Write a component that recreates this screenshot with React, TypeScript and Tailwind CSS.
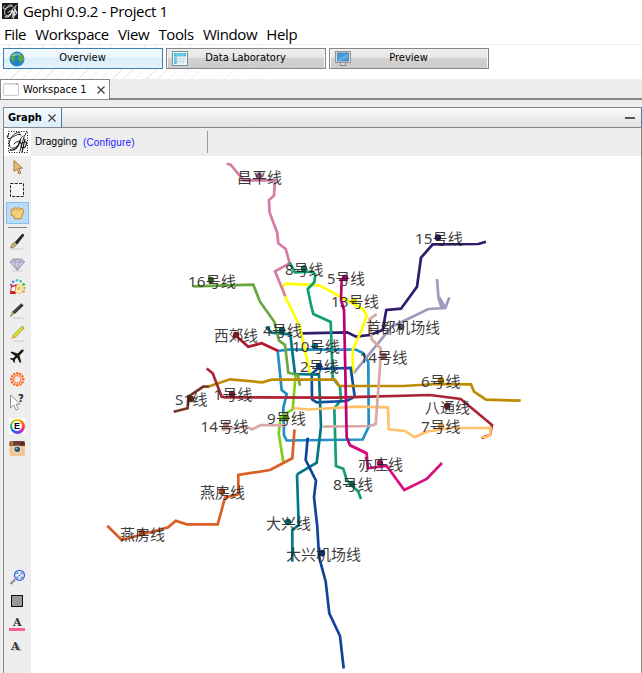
import React from "react";

type Line = { color: string; points: string; closed?: boolean };
type Label = { text: string; x: number; y: number; w: number; dot: [number, number]; color: string };

const UI = "font-['DejaVu_Sans_Condensed','DejaVu_Sans',sans-serif] text-black whitespace-nowrap";

const lines: Line[] = [
  { color: "#1f8fc6", closed: true, points: "277.7,351 288.3,349.7 355.7,349.5 363,353 368.3,362 368.7,426.7 362.7,439.5 286.7,440.5 284,435 283.3,408 286.7,394 281.7,390" },
  { color: "#a09bbd", points: "437,279 438.5,298 441,306 445.3,308 449.3,297.5 445.3,308 428.3,309 410,318 391.7,326.7 353.5,373.3" },
  { color: "#a09bbd", points: "439,297 445.3,308" },
  { color: "#31196b", points: "486,241.7 478.3,244 432.7,244.3 421,257.7 417,286.7 401,308.7 386.3,310 382.7,330 370,335 356,336.7 347.3,332.3 302.3,333.3" },
  { color: "#ffff00", points: "353,373 352.7,350 362,329 366.7,316 363.3,309.3 345,299.3 319.3,285.3 285.3,283.7 282,287.3 286.7,300 299.3,325 310,373.3" },
  { color: "#d47ba8", points: "226.7,163.7 230.7,164.7 243.5,180.3 275,180.3 274,195.7 269,200 269.5,212.3 277.3,233 278.3,243.3 285.7,249 289.7,263.3 275,271.3 285.3,296.3" },
  { color: "#119d78", points: "289.7,262.5 295,272.3 312.7,271.7 315.3,275 314.3,282.3 307.7,289 311,305 313.3,314 330.7,322 332.7,378.3 340,387 341,400 334.3,408.3 336,466 343.3,468.7 346.7,480 358.3,491.7 361,499" },
  { color: "#0e4fa0", closed: true, points: "311.7,374 317.3,369 350.7,368 354.7,396.7 346.7,401 316.7,402.3 312,399.3" },
  { color: "#037a82", points: "297,474.3 298.7,525 292.3,530 292.3,561.7" },
  { color: "#077484", points: "266,326.7 271.7,332.7 290.3,334.3 295,374 319,374.7 321,426.7 316.7,462.7 297,474.3" },
  { color: "#84ce18", points: "295.7,374 292.7,409.3 280.7,416.7 278.7,433.3 283.3,461.7" },
  { color: "#6aa642", points: "193.3,286.3 253.3,284.7 260,301.7 274.3,321.7 279,340.7 285,345 288.3,372.7 297.7,375 300,385.7" },
  { color: "#bd8c00", points: "208,386.7 230,379.3 262.3,382.3 271.7,379.7 335,379.7 339.3,386 403.3,386 436.7,384 471,384.3 474,391.7 486,399.7 520.7,400.7" },
  { color: "#ab2435", points: "206.7,368.5 212.7,373.3 221.7,396.7 225,397.3 335,397.7 370,396.7 430,395 460.7,399 492,425 490,435 481.5,438" },
  { color: "#ffc16b", points: "293.3,408 308.3,409.5 356.7,406.7 388,407.3 388.7,429.3 405,431 414.7,437.3 426.7,431.7 450,428 490.7,428 490,435 486.7,437 481.3,437" },
  { color: "#d8a8a4", points: "376.7,314 369.5,319.3 371.7,339.3 380.7,348.3 380,366.7 375.7,424 370,426 323.3,426.7" },
  { color: "#d8a8a4", points: "221.7,430 228,429 245,426.7 252.3,429.3 260.7,425 285.7,425.3" },
  { color: "#763424", points: "173.7,411.7 187.7,408.3 188.3,396.7 203.3,386.7 209,386.5" },
  { color: "#b5172e", points: "235,335 248.3,346.7 261.7,343.3 278.3,351" },
  { color: "#d85f25", points: "294.5,429.3 292.3,458.3 270,470 238.3,475 238.3,494.3 225,497.7 217.7,524.3 186.7,524.3 175.7,520.7 168.3,527.3 121.7,540 107.3,525.7" },
  { color: "#bd0074", points: "341.7,278.3 341,300 344,310 346.7,437.3 350,445.3 366.7,453.3" },
  { color: "#d8107d", points: "350,445.3 366.7,453.3 367.7,468.3 386.7,466 404.3,490 426.7,479 442,463" },
  { color: "#10449b", points: "307.7,437.7 305.7,460 316,480.7 314,497.3 317.3,526.7 319,556.7 325.7,581.7 329.3,613.3 340,636 343.7,668.5" },
];

const labels: Label[] = [
  { text: "昌平线", x: 237, y: 183, w: 45, dot: [259, 176], color: "#8f4f73" },
  { text: "15号线", x: 415, y: 244, w: 48, dot: [438, 237.5], color: "#251650" },
  { text: "8号线", x: 285, y: 275, w: 38.5, dot: [304, 268.5], color: "#0b6e58" },
  { text: "16号线", x: 188, y: 287, w: 48, dot: [211, 280], color: "#36651d" },
  { text: "5号线", x: 327, y: 284, w: 38, dot: [345, 278], color: "#a00062" },
  { text: "13号线", x: 331, y: 307, w: 48, dot: [354, 301], color: "#d3d300" },
  { text: "首都机场线", x: 366, y: 333, w: 74, dot: [401, 327], color: "#57516d" },
  { text: "西郊线", x: 214, y: 341, w: 44, dot: [236, 335], color: "#a01328" },
  { text: "4号线", x: 263, y: 336, w: 39, dot: [282, 330], color: "#06566b" },
  { text: "10号线", x: 292, y: 352, w: 48, dot: [315, 346], color: "#14658e" },
  { text: "14号线", x: 359.5, y: 363, w: 48, dot: [384, 356], color: "#94635e" },
  { text: "2号线", x: 300, y: 372, w: 39, dot: [319, 366], color: "#0b397a" },
  { text: "6号线", x: 421, y: 387, w: 39.5, dot: [441, 380.5], color: "#9d7200" },
  { text: "1号线", x: 213.5, y: 400, w: 39, dot: [232, 394], color: "#74202b" },
  { text: "S1线", x: 175, y: 405, w: 32.5, dot: [191, 399], color: "#562619" },
  { text: "八通线", x: 425, y: 412.5, w: 45, dot: [447, 406], color: "#791924" },
  { text: "9号线", x: 267, y: 424, w: 39, dot: [286, 418], color: "#4d7b10" },
  { text: "14号线", x: 200.5, y: 431.5, w: 48, dot: [226, 425], color: "#bd8580" },
  { text: "7号线", x: 421, y: 432, w: 39.5, dot: [441, 426], color: "#d59a4d" },
  { text: "亦庄线", x: 358, y: 469.5, w: 45, dot: [380, 463], color: "#a10b60" },
  { text: "8号线", x: 333, y: 490, w: 40, dot: [352, 484], color: "#0b694d" },
  { text: "燕房线", x: 200, y: 498, w: 45, dot: [222, 491.5], color: "#ae4417" },
  { text: "大兴线", x: 266, y: 529, w: 45, dot: [288, 522], color: "#035e62" },
  { text: "燕房线", x: 120, y: 539.5, w: 45, dot: [142, 533], color: "#ae4417" },
  { text: "大兴机场线", x: 286, y: 560, w: 75, dot: [322, 553], color: "#0b306f" },
];

function Graph() {
  return (
    <svg className="block h-[517px] w-[610px]" viewBox="31 156 610 517">
      {lines.map((l, i) =>
        l.closed ? (
          <polygon key={i} points={l.points} fill="none" stroke={l.color} strokeWidth="2.7" />
        ) : (
          <polyline key={i} points={l.points} fill="none" stroke={l.color} strokeWidth="2.7" />
        )
      )}
      {labels.map((l, i) => (
        <circle key={i} cx={l.dot[0]} cy={l.dot[1]} r="3.2" fill={l.color} />
      ))}
      {labels.map((l, i) => (
        <text
          key={i}
          x={l.x}
          y={l.y}
          textLength={l.w}
          lengthAdjust="spacingAndGlyphs"
          className="font-['Noto_Sans','Noto_Sans_CJK_SC',sans-serif] text-[15px]"
          fill="#222"
          fillOpacity="0.88"
        >
          {l.text}
        </text>
      ))}
    </svg>
  );
}

function Script({ color, width }: { color: string; width: number }) {
  return (
    <g fill="none" stroke={color} strokeLinecap="round">
      <path strokeWidth={width} d="M14 3C11 1 6 5 4 10S4 19 8 18S15 11 14 11S9 12 8 14M3 4C0 6 1 10 5 8S12 3 15 5" />
      <path strokeWidth={width * 1.4} d="M14 11C12 17 10 21 4 20" />
      <path strokeWidth={width} d="M20 3C17 7 16 15 14 21M17 6C14 8 13 12 15 14" />
      <path strokeWidth={width * 1.2} d="M18 12C15 12 14 18 17 18S22 11 19 12M19 9L16 22" />
    </g>
  );
}

function ToolIcon({ children, h = 23 }: { children?: React.ReactNode; h?: number }) {
  return (
    <svg className="block w-[23px] shrink-0" height={h} viewBox="0 0 23 23">
      {children}
    </svg>
  );
}

const petals = [0, 30, 60, 90, 120, 150, 180, 210, 240, 270, 300, 330];

function Sidebar() {
  return (
    <div className="flex h-[517px] w-[27px] shrink-0 flex-col bg-[#eee] pl-0.5">
      <ToolIcon>
        <path d="M8 4.5V15.5L10.7 13L13 18L15 17L12.8 12.3H16.5Z" fill="#e8bd72" stroke="#8b6532" strokeWidth=".8" />
      </ToolIcon>
      <ToolIcon>
        <rect x="4.5" y="4.5" width="13" height="13" fill="#f5f5f5" stroke="#222" strokeDasharray="3 1.3" />
      </ToolIcon>
      <div className="box-border h-[22px] w-[23px] border border-[#86c1ed] bg-[#bbdcf4]">
        <svg width="21" height="20" viewBox="0 0 21 20">
          <path d="M4.5 9C3.2 6.4 5.3 5.2 6.8 6.3C7 4.4 9.2 4.4 10 5.7C11 4 12.8 4.3 13.2 6C15 4.8 17.2 6.2 16.6 8.4L15.2 12.5L14.2 15.8H7.5L7 13.2L4.2 12.4L3.9 10.4Z" fill="#f4cf77" stroke="#a97527" strokeWidth=".8" />
          <path d="M7 6.3V8M10 5.9V7.8M13.1 6.2V8" stroke="#be8a36" strokeWidth=".6" />
        </svg>
      </div>
      <div className="ml-0.5 mt-[3px] h-px w-[19px] bg-[#808080]" />
      <div className="h-[2px]" />
      <ToolIcon>
        <path d="M5 19H17" stroke="#ccc" />
        <path d="M4.5 18C5.5 14 7 12.5 9.5 12L11 14C9 17 7 18 4.5 18Z" fill="#c5ae70" stroke="#776738" strokeWidth=".6" />
        <path d="M9.5 12L16.5 4L18 5L11.2 14Z" fill="#292929" stroke="#111" strokeWidth=".8" />
      </ToolIcon>
      <ToolIcon>
        <path d="M4 9L7 6H15.5L18.5 9L11.3 17.5Z" fill="#cecade" stroke="#8481a5" strokeWidth=".8" />
        <path d="M4 9H18.5M7 6L8.5 9L11.3 17L14 9L15.5 6M11 6L8.5 9M11 6L14 9" fill="none" stroke="#8e89b5" strokeWidth=".6" />
        <path d="M6 18H17" stroke="#ccc" />
      </ToolIcon>
      <ToolIcon>
        <circle cx="5.2" cy="9" r="1.2" fill="#a13fc8" />
        <circle cx="7.2" cy="5.8" r="1.2" fill="#5077ec" />
        <circle cx="11" cy="4.3" r="1.2" fill="#27c5c5" />
        <circle cx="14.7" cy="5.2" r="1.2" fill="#31be5e" />
        <circle cx="17.7" cy="8.2" r="1.3" fill="#36b431" />
        <circle cx="18.5" cy="12" r="1.2" fill="#9bc52c" />
        <circle cx="17.7" cy="15.5" r="1.2" fill="#ec9e24" />
        <path d="M4 17.5L5 10L11.5 8V13L9.5 18H4Z" fill="#ca2423" />
        <path d="M5.7 11.5L9.6 10L9 15H5.2Z" fill="#fff" />
        <path d="M11 8.5L16.5 9.5L15 17.5L9 16Z" fill="#fff6cb" stroke="#e0ad4d" strokeWidth=".7" />
        <path d="M12.2 10.3L14.8 11L13.2 14.8L10.8 14Z" fill="#f2bc37" />
      </ToolIcon>
      <ToolIcon>
        <path d="M7 19H18" stroke="#ccc" />
        <path d="M5 15.2L6.5 12.5L15.3 4.2L17.6 6.4L9 14.8Z" fill="#303030" />
        <path d="M6.3 12.7L8.8 15L4.3 17.4Z" fill="#c4a47b" />
        <path d="M4 17.8L5.8 16.8L5 15.9Z" fill="#111" />
        <path d="M8 12.8L15.3 5.7" stroke="#777" strokeWidth=".7" />
      </ToolIcon>
      <ToolIcon>
        <path d="M7 19H18" stroke="#ccc" />
        <path d="M6.5 14L16.2 4.2L18.2 6L8.5 16Z" fill="#ece421" stroke="#8b8720" strokeWidth=".8" />
        <path d="M6.5 14L8.3 15.8L4.5 18Z" fill="#eeb461" />
      </ToolIcon>
      <ToolIcon>
        <path d="M17.5 5C16.8 4 15.3 4.8 13.5 6.7L11.7 8.5L5.5 6.5L4.5 7.5L9.4 10.9L7.2 13.3L5 13L4 14L6.8 15.2L8 18L9 17L8.8 14.8L11.1 12.6L14 18L15.2 17L13.5 10.5L15.4 8.4C17.3 6.5 18.3 5.7 17.5 5Z" fill="#17170d" />
      </ToolIcon>
      <ToolIcon>
        {petals.map((a) => (
          <g key={a} transform={`rotate(${a} 11.3 11.3)`}>
            <path d="M11.3 9V5" stroke="#ff762d" strokeWidth=".7" />
            <circle cx="11.3" cy="5.3" r="1.25" fill="#ff6721" />
          </g>
        ))}
        <circle cx="11.3" cy="11.3" r="3.5" fill="#eee" stroke="#ff7328" strokeWidth="1.2" strokeDasharray="1.6 .5" />
      </ToolIcon>
      <ToolIcon>
        <path d="M4.5 4V17L7.7 14L10.1 19L12.3 18L10 13.2H14Z" fill="#fff" stroke="#777" strokeWidth=".8" />
        <text x="12" y="11" className="font-['DejaVu_Sans',sans-serif] text-[10px] font-bold" fill="#222">?</text>
      </ToolIcon>
      <div className="flex h-[23px] shrink-0 items-center pl-[3px] pt-px">
        <div className="flex size-4 items-center justify-center bg-white">
          <div className="flex size-[15px] items-center justify-center rounded-full bg-[conic-gradient(#ffd000,#ff7900,#f43,#d41dc7,#6246ef,#176bff,#00bc88,#7dce00,#ffd000)]">
            <div className="flex size-[10px] items-center justify-center rounded-full bg-white font-['Liberation_Sans',sans-serif] text-[9px] font-bold leading-none text-black">E</div>
          </div>
        </div>
      </div>
      <ToolIcon>
        <rect x="3.5" y="4" width="15.5" height="15" rx="2" fill="#efc795" />
        <path d="M3.5 9V6Q3.5 4 5.5 4H17Q19 4 19 6V9Z" fill="#6f3930" />
        <path d="M5 4V9" stroke="#d94835" />
        <path d="M6 4V9" stroke="#e2ba36" />
        <path d="M7 4V9" stroke="#43a151" />
        <circle cx="11.3" cy="12.2" r="3.8" fill="#f2e2ce" />
        <circle cx="11.3" cy="12.2" r="2.8" fill="#30546a" />
        <circle cx="10.6" cy="11.4" r="1" fill="#91bad0" />
        <circle cx="16.5" cy="6.3" r="1.2" fill="#382526" />
      </ToolIcon>
      <div className="grow" />
      <ToolIcon>
        <path d="M4.5 18L9 13.5" stroke="#8f8f8f" strokeWidth="2.3" />
        <circle cx="13.5" cy="9.3" r="5" fill="#e8efff" stroke="#3b66ce" strokeWidth="1.3" />
        <path d="M11 8V7H12.5M14.5 7H16V8.5M16 10.5V12H14.5M12.5 12H11V10.5" fill="none" stroke="#3158bd" />
        <rect x="12.8" y="8.8" width="1.5" height="1.5" fill="#3158bd" />
      </ToolIcon>
      <ToolIcon>
        <rect x="5.5" y="6.5" width="11" height="11" fill="#999" stroke="#111" />
      </ToolIcon>
      <ToolIcon>
        <text x="7" y="14" className="font-['DejaVu_Serif',serif] text-[11px] font-bold" fill="#333">A</text>
        <rect x="3" y="16" width="16" height="3" fill="#ff608c" />
      </ToolIcon>
      <div className="flex h-[23px] shrink-0 items-center pl-[5px] font-['DejaVu_Serif',serif] text-[11px] font-bold leading-none text-[#333] [text-shadow:2px_1px_0_#c3c3c3]">A</div>
      <div className="h-[15px] shrink-0" />
    </div>
  );
}

function Close() {
  return (
    <svg width="8" height="8" viewBox="0 0 8 8" className="shrink-0">
      <path d="M.5 .5L7.5 7.5M7.5 .5L.5 7.5" stroke="#444" strokeWidth="1.3" />
    </svg>
  );
}

function PerspectiveButton({ label, active, icon }: { label: string; active?: boolean; icon: React.ReactNode }) {
  return (
    <div
      className={
        active
          ? "flex h-[21px] w-[160px] items-center border border-[#3c7fae] bg-[linear-gradient(#f1f9fe,#e9f6fd_50%,#d7edfa_50%,#e5f4fc)] pl-[5px]"
          : "flex h-[21px] w-[160px] items-center border border-[#85858c] bg-[linear-gradient(#eee,#e5e5e5_50%,#d2d2d2_50%,#cbcbcb)] pl-[5px] shadow-[inset_1px_0_#f8f8f8,inset_-1px_0_#f8f8f8]"
      }
    >
      {icon}
      <span className={`${UI} -mt-px mr-[22px] grow text-center text-[11px]`}>{label}</span>
    </div>
  );
}

export default function App() {
  return (
    <div className="flex h-[673px] w-[642px] flex-col overflow-hidden bg-[#eee]">
      <div className="flex h-[25px] shrink-0 items-center bg-white pl-0.5">
        <svg width="16" height="16" viewBox="0 0 22 23" className="-mt-[3px] bg-[#1b1b1f]">
          <Script color="#f5f5f5" width={1.2} />
        </svg>
        <span className="ml-[5px] -mt-0.5 whitespace-nowrap font-['Open_Sans',sans-serif] text-[15px] tracking-[-0.36px] text-black">Gephi 0.9.2 - Project 1</span>
      </div>
      <div className="flex h-[20px] shrink-0 items-center gap-[9.2px] border-b border-[#eee] bg-white pl-1 font-['Open_Sans',sans-serif] text-[15px] leading-none tracking-[-0.4px] text-black">
        <span>File</span>
        <span>Workspace</span>
        <span>View</span>
        <span>Tools</span>
        <span>Window</span>
        <span>Help</span>
      </div>
      <div className="flex h-[34px] shrink-0 gap-[3px] bg-white bg-[linear-gradient(90deg,transparent_130px,#fff_300px),repeating-linear-gradient(135deg,#fff_0_7px,#ececec_7px_8px)] pl-[3px] pt-[3px]">
        <PerspectiveButton
          active
          label="Overview"
          icon={
            <svg width="16" height="16" viewBox="0 0 16 16">
              <circle cx="8" cy="8" r="7.5" fill="#2583c4" />
              <path d="M2 4.5Q4 2 6 2L7 4L5 5.5L6.5 7.5L5 9L5 12Q3 9 1.5 7.5ZM9 3L12 2.5L14.5 5.5L15 9L13 10L12 13L10.5 10L8.5 8L10 6Z" fill="#59a94b" />
              <path d="M2 5Q6 0 12 3Q9 5 2 5Z" fill="#d5f0ff" fillOpacity=".4" />
            </svg>
          }
        />
        <PerspectiveButton
          label="Data Laboratory"
          icon={
            <svg width="16" height="15" viewBox="0 0 16 15">
              <rect x=".5" y=".5" width="15" height="14" fill="#f6f6f6" stroke="#70989e" />
              <path d="M2 2H14V5H5V13H2Z" fill="#48c4e8" />
              <path d="M2 5.5H14M2 8H14M2 10.5H14M5 2V13M8 2V13M11 2V13" stroke="#b5d5dd" strokeWidth=".8" />
            </svg>
          }
        />
        <PerspectiveButton
          label="Preview"
          icon={
            <svg width="16" height="16" viewBox="0 0 16 16">
              <path d="M5 11H11V15H5Z" fill="#858585" />
              <rect x=".5" y=".5" width="15" height="11" fill="#dedede" stroke="#929292" />
              <rect x="2.5" y="2" width="11" height="8" fill="#4299dc" stroke="#337eac" strokeWidth=".7" />
              <path d="M3 8L13 3V6L6 10H3Z" fill="#80c3ee" fillOpacity=".5" />
              <path d="M6 12H10V14H6Z" fill="#ddd" />
            </svg>
          }
        />
      </div>
      <div className="flex h-[21px] shrink-0 border-b-2 border-[#858590]">
        <div className="flex h-[20px] w-[110px] items-center border border-b-0 border-[#858590] bg-white pl-0.5">
          <svg width="16" height="13" viewBox="0 0 16 13">
            <rect x=".5" y=".5" width="15" height="12" rx="1" fill="#fff" stroke="#c9c9c9" />
            <path d="M1 1H15" stroke="#cac5c1" />
            <path d="M13 1H15" stroke="#e17b60" />
          </svg>
          <span className={`${UI} ml-1 mr-auto text-[11px] leading-none`}>Workspace 1</span>
          <div className="mr-1"><Close /></div>
        </div>
      </div>
      <div className="ml-[3px] mt-[7px] flex min-h-0 grow flex-col border-l border-t border-[#858585]">
        <div className="flex h-[20px] shrink-0 border-b border-[#858590] bg-[linear-gradient(#fafafa,#e2e2e2)]">
          <div className="flex h-[19px] w-[58px] items-center border-r border-[#3c7fae] bg-[linear-gradient(#f5fbff,#dceffa)] pl-1">
            <span className={`${UI} text-[11px] font-bold leading-none`}>Graph</span>
            <div className="ml-auto mr-[5px]"><Close /></div>
          </div>
          <div className="ml-auto mr-1.5 mt-[9px] h-[2px] w-[10px] bg-[#555]" />
          <div className="w-px bg-[#3c7fae]" />
        </div>
        <div className="flex min-h-0 grow border-r border-[#858590]">
          <div className="flex grow flex-col">
            <div className="flex h-[28px] shrink-0 items-center">
              <div className="flex h-full w-[27px] items-center bg-white pl-[2px]">
                <svg width="23" height="24" viewBox="0 0 23 24">
                  <rect x="2.5" y="1.5" width="19" height="21" fill="none" stroke="#111" strokeWidth="1" strokeDasharray="1 1.5" />
                  <Script color="#161616" width={0.95} />
                </svg>
              </div>
              <span className={`${UI} ml-1 text-[10.5px] tracking-[-0.2px]`}>Dragging</span>
              <span className="ml-1.5 whitespace-nowrap font-['Liberation_Sans',sans-serif] text-[10px] tracking-[0.15px] text-[#2323ff]">(Configure)</span>
              <div className="ml-[72px] h-[22px] w-px bg-[#999]" />
            </div>
            <div className="flex bg-white">
              <Sidebar />
              <Graph />
            </div>
          </div>
        </div>
      </div>
    </div>
  );
}
